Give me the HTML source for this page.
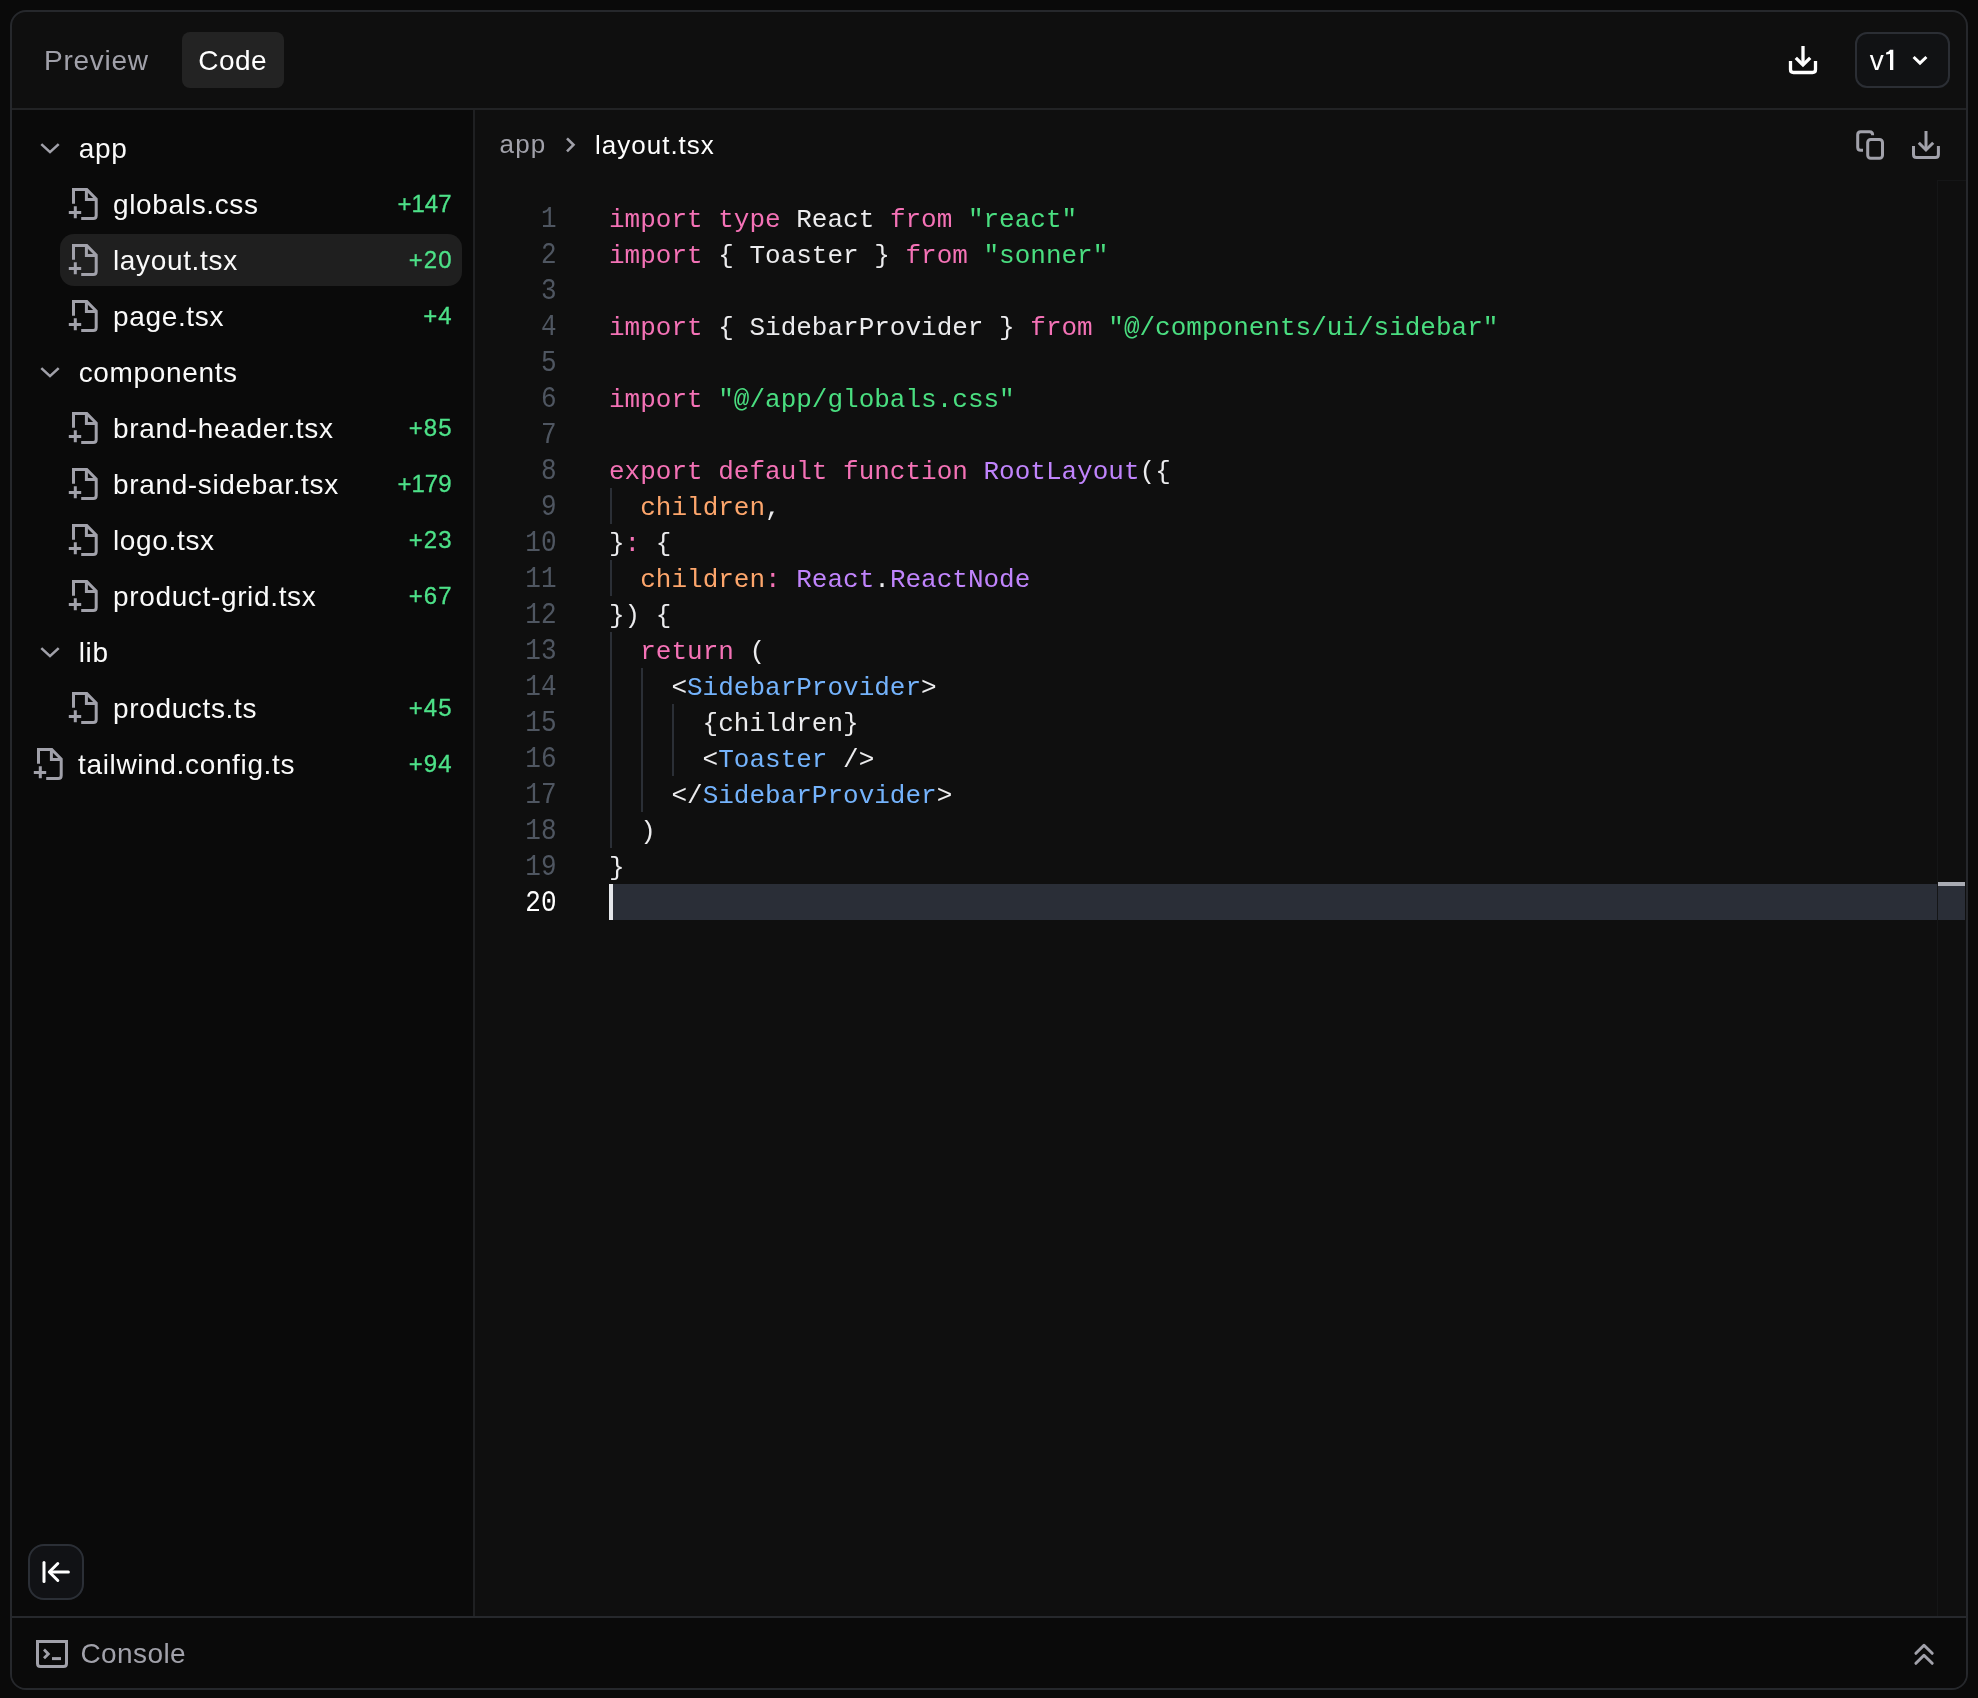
<!DOCTYPE html>
<html><head><meta charset="utf-8">
<style>
*{box-sizing:border-box;margin:0;padding:0}
html,body{width:1978px;height:1698px;overflow:hidden;background:#0a0a0a;font-family:"Liberation Sans",sans-serif;}
#panel{position:absolute;left:10px;top:10px;width:1958px;height:1680px;border:2px solid #26282c;border-radius:16px;background:#0f0f0f;overflow:hidden}
#c{position:absolute;left:-12px;top:-12px;width:1978px;height:1698px;will-change:transform}
#c>div,#c>svg{position:absolute}
.t{white-space:pre;line-height:1}
.m{white-space:pre;line-height:1;font-family:"Liberation Mono",monospace;font-size:26px}
#hdiv{left:0;top:108px;width:1978px;height:2px;background:#222325}
#side{left:0;top:110px;width:473px;height:1506px;background:#0a0a0a}
#vdiv{left:473px;top:110px;width:2px;height:1506px;background:#1f2022}
#code{left:475px;top:110px;width:1503px;height:1506px;background:#0f0f0f}
#fdiv{left:0;top:1616px;width:1978px;height:2px;background:#26282c}
#foot{left:0;top:1618px;width:1978px;height:80px;background:#0a0a0a}
</style></head><body>
<div id="panel"><div id="c">
<div id="hdiv"></div>
<div id="side"></div>
<div id="vdiv"></div>
<div id="code"></div>
<div id="fdiv"></div>
<div id="foot"></div>
<div class="t" style="left:44px;top:47.29px;font-size:28px;color:#a1a1aa;letter-spacing:0.75px">Preview</div>
<div style="left:182px;top:32px;width:102px;height:56px;border-radius:8px;background:#232323"></div>
<div class="t" style="left:198.2px;top:47.29px;font-size:28px;color:#ffffff;letter-spacing:0.5px">Code</div>
<svg style="left:0;top:0" width="1978" height="200" viewBox="0 0 1978 200" fill="none" stroke-width="3.3">
<g stroke="#ffffff">
<path d="M1803 46V64.5"/><path d="M1795.8 57.8L1803 65L1810.2 57.8"/>
<path d="M1790.5 61V69.5Q1790.5 72.5 1793.5 72.5H1812.5Q1815.5 72.5 1815.5 69.5V61"/>
</g>
<g stroke="#a1a1aa" stroke-width="3">
<path d="M1926 131V149.5"/><path d="M1918.8 142.8L1926 150L1933.2 142.8"/>
<path d="M1913.5 146V154.4Q1913.5 157.4 1916.5 157.4H1935.4Q1938.4 157.4 1938.4 154.4V146"/>
<path d="M1863 150.2H1860.7Q1857.7 150.2 1857.7 147.2V134.7Q1857.7 131.7 1860.7 131.7H1869.6Q1872.6 131.7 1872.6 134.7V135.3"/>
<rect x="1867.7" y="139.5" width="14.8" height="18.8" rx="3"/>
</g>
</svg>
<div style="left:1855px;top:32px;width:95px;height:56px;border:2px solid #2b2e34;border-radius:12px;background:#111214"></div>
<div class="t" style="left:1869.8px;top:47.09px;font-size:28px;color:#ffffff;">v</div>
<svg style="left:1880px;top:45px" width="20" height="30" viewBox="1880 45 20 30"><path d="M1890 49.8H1893.3V69.9H1890V53.9Q1888.6 54.3 1886.1 54.5V52.5Q1889.2 52 1890 49.8Z" fill="#ffffff"/></svg>
<svg style="left:1900px;top:40px" width="40" height="40" viewBox="1900 40 40 40" fill="none">
<path d="M1913.6 57L1920 63.2L1926.4 57" stroke="#ffffff" stroke-width="3"/>
</svg>
<div style="left:60px;top:234px;width:402px;height:52px;border-radius:14px;background:#1f1f1f"></div>
<div class="t" style="left:78.7px;top:134.79px;font-size:28px;color:#fafafa;letter-spacing:0.65px">app</div>
<div class="t" style="left:113px;top:190.79px;font-size:28px;color:#fafafa;letter-spacing:0.65px">globals.css</div>
<div class="t" style="right:1526.5px;top:191.88px;font-size:24px;color:#4de188;text-align:right;letter-spacing:0px;-webkit-text-stroke:0.3px #4de188">+147</div>
<div class="t" style="left:113px;top:246.79px;font-size:28px;color:#fafafa;letter-spacing:0.65px">layout.tsx</div>
<div class="t" style="right:1525.5px;top:247.88px;font-size:24px;color:#4de188;text-align:right;letter-spacing:1px;-webkit-text-stroke:0.3px #4de188">+20</div>
<div class="t" style="left:113px;top:302.79px;font-size:28px;color:#fafafa;letter-spacing:0.65px">page.tsx</div>
<div class="t" style="right:1525.5px;top:303.88px;font-size:24px;color:#4de188;text-align:right;letter-spacing:1px;-webkit-text-stroke:0.3px #4de188">+4</div>
<div class="t" style="left:78.7px;top:358.79px;font-size:28px;color:#fafafa;letter-spacing:0.65px">components</div>
<div class="t" style="left:113px;top:414.79px;font-size:28px;color:#fafafa;letter-spacing:0.65px">brand-header.tsx</div>
<div class="t" style="right:1525.5px;top:415.88px;font-size:24px;color:#4de188;text-align:right;letter-spacing:1px;-webkit-text-stroke:0.3px #4de188">+85</div>
<div class="t" style="left:113px;top:470.79px;font-size:28px;color:#fafafa;letter-spacing:0.65px">brand-sidebar.tsx</div>
<div class="t" style="right:1526.5px;top:471.88px;font-size:24px;color:#4de188;text-align:right;letter-spacing:0px;-webkit-text-stroke:0.3px #4de188">+179</div>
<div class="t" style="left:113px;top:526.79px;font-size:28px;color:#fafafa;letter-spacing:0.65px">logo.tsx</div>
<div class="t" style="right:1525.5px;top:527.88px;font-size:24px;color:#4de188;text-align:right;letter-spacing:1px;-webkit-text-stroke:0.3px #4de188">+23</div>
<div class="t" style="left:113px;top:582.79px;font-size:28px;color:#fafafa;letter-spacing:0.65px">product-grid.tsx</div>
<div class="t" style="right:1525.5px;top:583.88px;font-size:24px;color:#4de188;text-align:right;letter-spacing:1px;-webkit-text-stroke:0.3px #4de188">+67</div>
<div class="t" style="left:78.7px;top:638.79px;font-size:28px;color:#fafafa;letter-spacing:0.65px">lib</div>
<div class="t" style="left:113px;top:694.79px;font-size:28px;color:#fafafa;letter-spacing:0.65px">products.ts</div>
<div class="t" style="right:1525.5px;top:695.88px;font-size:24px;color:#4de188;text-align:right;letter-spacing:1px;-webkit-text-stroke:0.3px #4de188">+45</div>
<div class="t" style="left:78px;top:750.79px;font-size:28px;color:#fafafa;letter-spacing:0.65px">tailwind.config.ts</div>
<div class="t" style="right:1525.5px;top:751.88px;font-size:24px;color:#4de188;text-align:right;letter-spacing:1px;-webkit-text-stroke:0.3px #4de188">+94</div>
<svg style="left:0;top:0" width="480" height="800" viewBox="0 0 480 800" fill="none" stroke="#a1a1aa">
<path d="M41.3 144.1L50 152.1L58.7 144.1" stroke-width="2.6"/>
<g transform="translate(60 180)" stroke-width="3"><path d="M13.5 23.8V9.6H26.8L36.2 19V35.5Q36.2 38.5 33.2 38.5H21.2"/><path d="M26.4 9.6V19.6H36.2"/><path d="M15.3 26.2V38.3M8.8 32.4H21.2"/></g>
<g transform="translate(60 236)" stroke-width="3"><path d="M13.5 23.8V9.6H26.8L36.2 19V35.5Q36.2 38.5 33.2 38.5H21.2"/><path d="M26.4 9.6V19.6H36.2"/><path d="M15.3 26.2V38.3M8.8 32.4H21.2"/></g>
<g transform="translate(60 292)" stroke-width="3"><path d="M13.5 23.8V9.6H26.8L36.2 19V35.5Q36.2 38.5 33.2 38.5H21.2"/><path d="M26.4 9.6V19.6H36.2"/><path d="M15.3 26.2V38.3M8.8 32.4H21.2"/></g>
<path d="M41.3 368.1L50 376.1L58.7 368.1" stroke-width="2.6"/>
<g transform="translate(60 404)" stroke-width="3"><path d="M13.5 23.8V9.6H26.8L36.2 19V35.5Q36.2 38.5 33.2 38.5H21.2"/><path d="M26.4 9.6V19.6H36.2"/><path d="M15.3 26.2V38.3M8.8 32.4H21.2"/></g>
<g transform="translate(60 460)" stroke-width="3"><path d="M13.5 23.8V9.6H26.8L36.2 19V35.5Q36.2 38.5 33.2 38.5H21.2"/><path d="M26.4 9.6V19.6H36.2"/><path d="M15.3 26.2V38.3M8.8 32.4H21.2"/></g>
<g transform="translate(60 516)" stroke-width="3"><path d="M13.5 23.8V9.6H26.8L36.2 19V35.5Q36.2 38.5 33.2 38.5H21.2"/><path d="M26.4 9.6V19.6H36.2"/><path d="M15.3 26.2V38.3M8.8 32.4H21.2"/></g>
<g transform="translate(60 572)" stroke-width="3"><path d="M13.5 23.8V9.6H26.8L36.2 19V35.5Q36.2 38.5 33.2 38.5H21.2"/><path d="M26.4 9.6V19.6H36.2"/><path d="M15.3 26.2V38.3M8.8 32.4H21.2"/></g>
<path d="M41.3 648.1L50 656.1L58.7 648.1" stroke-width="2.6"/>
<g transform="translate(60 684)" stroke-width="3"><path d="M13.5 23.8V9.6H26.8L36.2 19V35.5Q36.2 38.5 33.2 38.5H21.2"/><path d="M26.4 9.6V19.6H36.2"/><path d="M15.3 26.2V38.3M8.8 32.4H21.2"/></g>
<g transform="translate(25 740)" stroke-width="3"><path d="M13.5 23.8V9.6H26.8L36.2 19V35.5Q36.2 38.5 33.2 38.5H21.2"/><path d="M26.4 9.6V19.6H36.2"/><path d="M15.3 26.2V38.3M8.8 32.4H21.2"/></g>
</svg>
<div class="t" style="left:499.5px;top:131.49px;font-size:26px;color:#a1a1aa;letter-spacing:1.2px">app</div>
<svg style="left:550px;top:125px" width="40" height="40" viewBox="550 125 40 40" fill="none"><path d="M567 138.3L573.5 144.8L567 151.3" stroke="#a1a1aa" stroke-width="2.6"/></svg>
<div class="t" style="left:595px;top:131.99px;font-size:26px;color:#ffffff;letter-spacing:1px">layout.tsx</div>
<div style="left:613px;top:884px;width:1352px;height:36px;background:#2a2e37"></div>
<div style="left:609px;top:884px;width:4px;height:36px;background:#e5e7eb"></div>
<div style="left:610px;top:488px;width:2px;height:36px;background:#2b2f36"></div>
<div style="left:610px;top:560px;width:2px;height:36px;background:#2b2f36"></div>
<div style="left:610px;top:632px;width:2px;height:216px;background:#2b2f36"></div>
<div style="left:641px;top:668px;width:2px;height:144px;background:#2b2f36"></div>
<div style="left:672px;top:704px;width:2px;height:72px;background:#2b2f36"></div>
<div class="m" style="right:1421.5px;top:207.08px;color:#4f5661;text-align:right;transform:scaleY(1.11);transform-origin:100% 19.9px">1</div>
<div class="m" style="left:609px;top:207.08px;color:#ececee"><span style="color:#f472b6">import</span> <span style="color:#f472b6">type</span> React <span style="color:#f472b6">from</span> <span style="color:#4ade80">"react"</span></div>
<div class="m" style="right:1421.5px;top:243.08px;color:#4f5661;text-align:right;transform:scaleY(1.11);transform-origin:100% 19.9px">2</div>
<div class="m" style="left:609px;top:243.08px;color:#ececee"><span style="color:#f472b6">import</span> { Toaster } <span style="color:#f472b6">from</span> <span style="color:#4ade80">"sonner"</span></div>
<div class="m" style="right:1421.5px;top:279.08px;color:#4f5661;text-align:right;transform:scaleY(1.11);transform-origin:100% 19.9px">3</div>
<div class="m" style="right:1421.5px;top:315.08px;color:#4f5661;text-align:right;transform:scaleY(1.11);transform-origin:100% 19.9px">4</div>
<div class="m" style="left:609px;top:315.08px;color:#ececee"><span style="color:#f472b6">import</span> { SidebarProvider } <span style="color:#f472b6">from</span> <span style="color:#4ade80">"@/components/ui/sidebar"</span></div>
<div class="m" style="right:1421.5px;top:351.08px;color:#4f5661;text-align:right;transform:scaleY(1.11);transform-origin:100% 19.9px">5</div>
<div class="m" style="right:1421.5px;top:387.08px;color:#4f5661;text-align:right;transform:scaleY(1.11);transform-origin:100% 19.9px">6</div>
<div class="m" style="left:609px;top:387.08px;color:#ececee"><span style="color:#f472b6">import</span> <span style="color:#4ade80">"@/app/globals.css"</span></div>
<div class="m" style="right:1421.5px;top:423.08px;color:#4f5661;text-align:right;transform:scaleY(1.11);transform-origin:100% 19.9px">7</div>
<div class="m" style="right:1421.5px;top:459.08px;color:#4f5661;text-align:right;transform:scaleY(1.11);transform-origin:100% 19.9px">8</div>
<div class="m" style="left:609px;top:459.08px;color:#ececee"><span style="color:#f472b6">export</span> <span style="color:#f472b6">default</span> <span style="color:#f472b6">function</span> <span style="color:#c084fc">RootLayout</span>({</div>
<div class="m" style="right:1421.5px;top:495.08px;color:#4f5661;text-align:right;transform:scaleY(1.11);transform-origin:100% 19.9px">9</div>
<div class="m" style="left:609px;top:495.08px;color:#ececee">  <span style="color:#fda66c">children</span>,</div>
<div class="m" style="right:1421.5px;top:531.08px;color:#4f5661;text-align:right;transform:scaleY(1.11);transform-origin:100% 19.9px">10</div>
<div class="m" style="left:609px;top:531.08px;color:#ececee">}<span style="color:#f472b6">:</span> {</div>
<div class="m" style="right:1421.5px;top:567.08px;color:#4f5661;text-align:right;transform:scaleY(1.11);transform-origin:100% 19.9px">11</div>
<div class="m" style="left:609px;top:567.08px;color:#ececee">  <span style="color:#fda66c">children</span><span style="color:#f472b6">:</span> <span style="color:#c084fc">React</span>.<span style="color:#c084fc">ReactNode</span></div>
<div class="m" style="right:1421.5px;top:603.08px;color:#4f5661;text-align:right;transform:scaleY(1.11);transform-origin:100% 19.9px">12</div>
<div class="m" style="left:609px;top:603.08px;color:#ececee">}) {</div>
<div class="m" style="right:1421.5px;top:639.08px;color:#4f5661;text-align:right;transform:scaleY(1.11);transform-origin:100% 19.9px">13</div>
<div class="m" style="left:609px;top:639.08px;color:#ececee">  <span style="color:#f472b6">return</span> (</div>
<div class="m" style="right:1421.5px;top:675.08px;color:#4f5661;text-align:right;transform:scaleY(1.11);transform-origin:100% 19.9px">14</div>
<div class="m" style="left:609px;top:675.08px;color:#ececee">    &lt;<span style="color:#74b3fc">SidebarProvider</span>&gt;</div>
<div class="m" style="right:1421.5px;top:711.08px;color:#4f5661;text-align:right;transform:scaleY(1.11);transform-origin:100% 19.9px">15</div>
<div class="m" style="left:609px;top:711.08px;color:#ececee">      {children}</div>
<div class="m" style="right:1421.5px;top:747.08px;color:#4f5661;text-align:right;transform:scaleY(1.11);transform-origin:100% 19.9px">16</div>
<div class="m" style="left:609px;top:747.08px;color:#ececee">      &lt;<span style="color:#74b3fc">Toaster</span> /&gt;</div>
<div class="m" style="right:1421.5px;top:783.08px;color:#4f5661;text-align:right;transform:scaleY(1.11);transform-origin:100% 19.9px">17</div>
<div class="m" style="left:609px;top:783.08px;color:#ececee">    &lt;/<span style="color:#74b3fc">SidebarProvider</span>&gt;</div>
<div class="m" style="right:1421.5px;top:819.08px;color:#4f5661;text-align:right;transform:scaleY(1.11);transform-origin:100% 19.9px">18</div>
<div class="m" style="left:609px;top:819.08px;color:#ececee">  )</div>
<div class="m" style="right:1421.5px;top:855.08px;color:#4f5661;text-align:right;transform:scaleY(1.11);transform-origin:100% 19.9px">19</div>
<div class="m" style="left:609px;top:855.08px;color:#ececee">}</div>
<div class="m" style="right:1421.5px;top:891.08px;color:#ffffff;text-align:right;transform:scaleY(1.11);transform-origin:100% 19.9px">20</div>
<div style="left:1937px;top:180px;width:1px;height:1436px;background:#151617"></div>
<div style="left:1937px;top:180px;width:29px;height:1px;background:#151617"></div>
<div style="left:1938px;top:882px;width:27px;height:4px;background:#a9abb3"></div>
<div style="left:28px;top:1544px;width:56px;height:56px;border:2px solid #2b2f36;border-radius:16px;background:#111215"></div>
<svg style="left:0;top:1530px" width="1978" height="168" viewBox="0 1530 1978 168" fill="none" stroke-width="3" stroke-linecap="round" stroke-linejoin="round">
<g stroke="#ffffff"><path d="M44 1562.5V1581.5"/><path d="M50 1572H68.4"/><path d="M57.8 1563.5L49.3 1572L57.8 1580.5"/></g>
<g stroke="#a1a1aa">
<path d="M1915.9 1653.3L1924 1645.3L1932.2 1653.3"/><path d="M1915.9 1663.3L1924 1655.3L1932.2 1663.3"/>
</g>
<g stroke="#a1a1aa" stroke-linecap="butt" stroke-linejoin="miter">
<path d="M37.5 1641.5H66.5V1663.5Q66.5 1666.5 63.5 1666.5H40.5Q37.5 1666.5 37.5 1663.5Z"/>
<path d="M44 1649.6L48.3 1653.9L44 1658.2" stroke-width="2.8"/><path d="M52 1658.6H61"/>
</g>
</svg>
<div class="t" style="left:80.5px;top:1640.29px;font-size:28px;color:#a1a1aa;letter-spacing:0.4px">Console</div>
</div></div>
</body></html>
